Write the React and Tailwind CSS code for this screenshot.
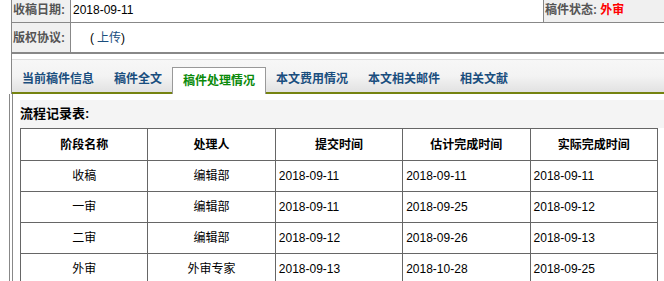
import React from "react";

const F = { fontFamily: '"Liberation Sans", "Noto Sans CJK SC", sans-serif' };

const rows = [
  ["收稿", "编辑部", "2018-09-11", "2018-09-11", "2018-09-11"],
  ["一审", "编辑部", "2018-09-11", "2018-09-25", "2018-09-12"],
  ["二审", "编辑部", "2018-09-12", "2018-09-26", "2018-09-13"],
  ["外审", "外审专家", "2018-09-13", "2018-10-28", "2018-09-25"],
];

const tabs = ["当前稿件信息", "稿件全文", "稿件处理情况", "本文费用情况", "本文相关邮件", "相关文献"];

export default function App() {
  return (
    <div className="w-[664px] h-[281px] overflow-hidden bg-white text-[12px] text-black" style={F}>
      {/* top info table */}
      <div className="ml-[11px] border-l border-[#888]">
        <div className="flex h-[23px] border-b border-[#888]">
          <div className="w-[59px] bg-[#f0f0f0] border-r border-[#888] pl-[1px] pt-[1px] font-bold text-[#555]">收稿日期:</div>
          <div className="flex-1 pl-[2px] pt-[1px]">2018-09-11</div>
          <div className="w-[121px] bg-[#f0f0f0] border-l border-[#888] pl-[1px] pt-[1px] font-bold text-[#555]">
            稿件状态: <span className="text-[#ff0000]">外审</span>
          </div>
        </div>
        <div className="flex h-[31px] border-b-2 border-[#888]">
          <div className="w-[59px] bg-[#f0f0f0] border-r border-[#888] pl-[1px] flex items-center font-bold text-[#555]">版权协议:</div>
          <div className="flex-1 flex items-center pl-[19px]">
            ( <span className="text-[#1a4e7e] ml-[3px]">上传</span>)
          </div>
        </div>
        {/* tabs */}
        <div className="pt-[5px]">
          <div className="h-[35px] border-t border-[#dedede] bg-gradient-to-b from-[#f7f7f7] via-[#f3f3f3] to-[#e2e2e2] border-b-2 border-b-[#758310] flex items-end">
            {tabs.map((t, i) =>
              i === 2 ? (
                <div key={t} className="h-[27px] -mb-[2px] px-[10px] bg-white border border-b-0 border-[#999] flex items-center font-bold text-[#0a8a0a]">
                  {t}
                </div>
              ) : (
                <div key={t} className="h-[27px] px-[10px] flex items-center font-bold text-[#1a4e7e]">
                  {t}
                </div>
              )
            )}
          </div>
        </div>
      </div>
      {/* content */}
      <div className="ml-[9px] border-l border-[#888]">
        <div className="ml-[2px] border-l border-[#888] pl-[7px] pt-[6px] h-[200px]">
          <div className="h-[28px] bg-[#f4f4f4] flex items-center font-bold text-[13px]">流程记录表:</div>
          <div className="w-[638px]">
            <table className="border-collapse w-full table-fixed">
              <thead>
                <tr className="h-[32px]">
                  {["阶段名称", "处理人", "提交时间", "估计完成时间", "实际完成时间"].map((h) => (
                    <th key={h} className="border border-[#666] font-bold text-[12px] text-center">{h}</th>
                  ))}
                </tr>
              </thead>
              <tbody>
                {rows.map((r) => (
                  <tr key={r[0]} className="h-[31px]">
                    <td className="border border-[#666] text-center">{r[0]}</td>
                    <td className="border border-[#666] text-center">{r[1]}</td>
                    <td className="border border-[#666] pl-[3px]">{r[2]}</td>
                    <td className="border border-[#666] pl-[3px]">{r[3]}</td>
                    <td className="border border-[#666] pl-[3px]">{r[4]}</td>
                  </tr>
                ))}
              </tbody>
            </table>
          </div>
        </div>
      </div>
    </div>
  );
}
